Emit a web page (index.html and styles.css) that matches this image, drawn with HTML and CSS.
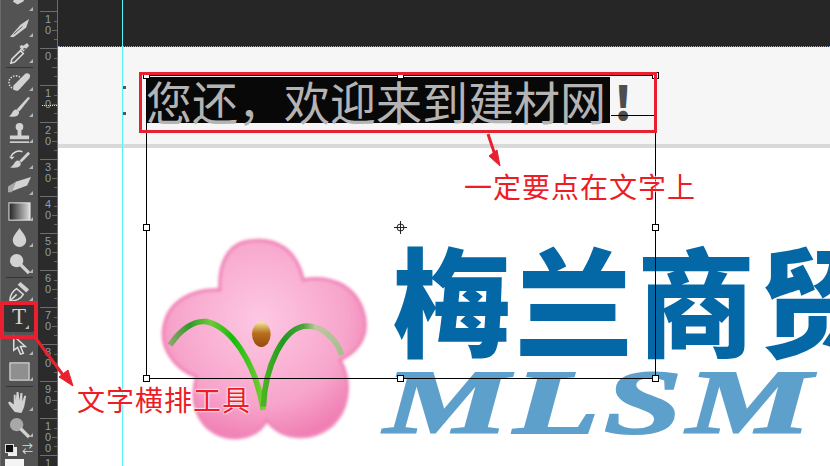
FILE: index.html
```html
<!DOCTYPE html>
<html lang="zh-CN">

<head>
  <meta charset="UTF-8"/>
  <title>文字横排工具</title>
  <link rel="stylesheet" href="styles.css">
</head>

<body>
<div class="window">
  <div class="toolbar">
    <div class="tools">
      <div class="tool"><svg viewBox="0 0 24 24"><path class="fill" d="M5 12l6-7 8 1-3 6-6 3z"/></svg></div>
      <div class="tool"><svg viewBox="0 0 24 24"><path class="fill" d="M2 22L13 9l9-6-3 9L6 22z"/><path class="dark" d="M6 19l9-8"/></svg></div>
      <div class="tool"><svg viewBox="0 0 24 24"><path class="line" d="M3 22l1-4 9-9 3 3-9 9z"/><path class="fill" d="M12 7l2 2 3-3 2 1 3-3-2-3-3 2-1 1-2-1-2 2 4 5 2-2z"/></svg></div>
      <div class="sep"></div>
      <div class="tool"><svg viewBox="0 0 24 24"><circle class="dots" cx="8" cy="13" r="7"/><path class="fill" d="M6 16L18 4c3-2 7 1 4 5L11 21c-3 2-7-1-5-5z"/></svg></div>
      <div class="tool"><svg viewBox="0 0 24 24"><path class="fill" d="M21 1l2 1-11 14-3-2z"/><path class="fill" d="M8 14c4 0 4 4 3 5-2 3-6 3-10 2 3-1 4-7 7-7z"/></svg></div>
      <div class="tool"><svg viewBox="0 0 24 24"><circle class="fill" cx="12" cy="5" r="4"/><path class="fill" d="M10 8h4v6h8v4H2v-4h8z"/><path class="line" d="M2 21h20"/></svg></div>
      <div class="tool"><svg viewBox="0 0 24 24"><path class="line" d="M3 9c2-5 8-7 12-5"/><path class="fill" d="M21 4l2 2-9 9-2-2z"/><path class="fill" d="M10 13c3 0 4 3 3 5-2 3-7 3-11 2 4-1 5-7 8-7z"/><path class="fill" d="M1 9h6l-3 3z"/></svg></div>
      <div class="tool"><svg viewBox="0 0 24 24"><path class="fill" d="M8 8l16-5-4 9-16 6z"/><path class="grey" d="M0 13l8-5-4 11H0z"/></svg></div>
      <div class="tool"><svg viewBox="0 0 24 24"><defs><linearGradient id="ramp"><stop offset="0" stop-color="#222"/><stop offset="1" stop-color="#ddd"/></linearGradient></defs><rect x="1" y="3" width="22" height="18" fill="url(#ramp)" stroke="#eee"/></svg></div>
      <div class="tool"><svg viewBox="0 0 24 24"><path class="fill" d="M12 2c3 5 7 8 7 13a7 7 0 0 1-14 0c0-5 4-8 7-13z"/></svg></div>
      <div class="tool"><svg viewBox="0 0 24 24"><circle class="fill" cx="9" cy="9" r="7"/><path class="thick" d="M13 13l9 9"/></svg></div>
      <div class="sep"></div>
      <div class="tool"><svg viewBox="0 0 24 24"><path class="line" d="M2 22c0-6 2-10 7-13l7 6c-3 5-8 7-14 7z"/><path class="fill" d="M13 2l9 8-3 3-9-8z"/><path class="line" d="M2 22l7-7"/></svg></div>
      <div class="tool tool-active">T</div>
      <div class="tool tool-low"><svg viewBox="0 0 24 24"><path class="line" d="M6 2v15l4-3 3 7 3-1-3-7h5z"/></svg></div>
      <div class="tool"><svg viewBox="0 0 24 24"><rect x="2" y="3" width="20" height="18" fill="#8f8f8f" stroke="#eee"/></svg></div>
      <div class="sep sep-wide"></div>
      <div class="tool"><svg viewBox="0 0 24 24"><path class="fill" d="M7 23c-2-3-6-7-7-10l2-1 4 3V5h2v6l1-9h2l1 9 1-8h2l0 9 2-6h2l-2 11c-1 3-2 5-3 7z"/></svg></div>
      <div class="tool"><svg viewBox="0 0 24 24"><circle class="grey" cx="9" cy="9" r="7"/><path class="thick" d="M13 13l9 9"/></svg></div>
    </div>
    <div class="swatches">
      <div class="mini-swatch"></div>
      <span class="swap">⇄</span>
    </div>
    <div class="swatch"></div>
  </div>

  <div class="ruler">
    <div class="ruler-cell"><span>1</span><span>0</span></div>
    <div class="ruler-cell"><span>0</span></div>
    <div class="ruler-cell"><span>1</span><span>0</span></div>
    <div class="ruler-cell"><span>2</span><span>0</span></div>
    <div class="ruler-cell"><span>3</span><span>0</span></div>
    <div class="ruler-cell"><span>4</span><span>0</span></div>
    <div class="ruler-cell"><span>5</span><span>0</span></div>
    <div class="ruler-cell"><span>6</span><span>0</span></div>
    <div class="ruler-cell"><span>7</span><span>0</span></div>
    <div class="ruler-cell"><span>8</span><span>0</span></div>
    <div class="ruler-cell"><span>9</span><span>0</span></div>
    <div class="ruler-cell"><span>1</span><span>0</span><span>0</span></div>
    <div class="ruler-cell ruler-last"><span>1</span></div>
  </div>

  <div class="canvas">
    <div class="pasteboard"></div>
    <div class="band">
      <span class="selected">您还，欢迎来到建材网</span><span class="bang">!</span>
    </div>
    <div class="band-edge"></div>
    <div class="page">
      <svg class="flower" viewBox="0 0 750 738">
        <defs>
          <radialGradient id="petal" cx="0.48" cy="0.4" r="0.62">
            <stop offset="0" stop-color="#fdc8e4"/>
            <stop offset="0.7" stop-color="#f7a4cb"/>
            <stop offset="1" stop-color="#f07fb3"/>
          </radialGradient>
          <linearGradient id="seed" x1="0" y1="0" x2="0" y2="1">
            <stop offset="0" stop-color="#f6e9a0"/>
            <stop offset="0.45" stop-color="#b8701c"/>
            <stop offset="1" stop-color="#97480e"/>
          </linearGradient>
          <linearGradient id="stem-left" gradientUnits="userSpaceOnUse" x1="90" y1="0" x2="380" y2="0">
            <stop offset="0" stop-color="#8ea66a"/>
            <stop offset="0.2" stop-color="#2f9a2a"/>
            <stop offset="0.42" stop-color="#6fc93a"/>
            <stop offset="0.65" stop-color="#12bd08"/>
            <stop offset="1" stop-color="#86cf3a"/>
          </linearGradient>
          <linearGradient id="stem-right" gradientUnits="userSpaceOnUse" x1="370" y1="0" x2="610" y2="0">
            <stop offset="0" stop-color="#4cb424"/>
            <stop offset="0.25" stop-color="#1e9a1e"/>
            <stop offset="0.5" stop-color="#4da33c"/>
            <stop offset="0.65" stop-color="#bcc8a0"/>
            <stop offset="1" stop-color="#a9bd90"/>
          </linearGradient>
          <filter id="soft"><feGaussianBlur stdDeviation="5"/></filter>
        </defs>
        <path class="petals" d="M240 210C235 130 265 65 340 62C410 55 470 90 490 180C560 165 640 190 668 270C690 335 665 390 600 420C635 480 630 570 570 620C510 665 425 660 380 600C350 660 260 670 205 625C160 585 155 520 170 470C100 445 60 380 72 320C85 240 165 205 240 210Z"/>
        <path class="stem stem-l" d="M90 375C120 330 160 300 200 305C270 320 345 420 370 570"/>
        <path class="stem stem-r" d="M370 560C375 440 430 320 500 318C550 318 590 360 605 405"/>
        <ellipse cx="364" cy="343" rx="28" ry="38" fill="url(#seed)"/>
      </svg>
      <div class="brand">
        <div class="brand-cn">梅兰商贸</div>
        <div class="brand-en">MLSM</div>
      </div>
    </div>
  </div>

  <div class="guide"></div>
  <i class="guide-dot guide-dot-a"></i>
  <i class="guide-dot guide-dot-b"></i>
  <div class="ruler-cursor"></div>

  <div class="transform">
    <i class="handle h-tl"></i><i class="handle h-tc"></i><i class="handle h-tr"></i>
    <i class="handle h-ml"></i><i class="handle h-mr"></i>
    <i class="handle h-bl"></i><i class="handle h-bc"></i><i class="handle h-br"></i>
    <div class="baseline"></div>
  </div>
  <svg class="pivot" viewBox="0 0 13 13"><circle cx="6.5" cy="6.5" r="3.5"/><path d="M6.5 0v13M0 6.5h13"/></svg>

  <div class="mark mark-text"></div>
  <div class="mark mark-tool"></div>
  <svg class="arrows" viewBox="0 0 830 466">
    <path class="arrow-line" d="M34 336L63 375"/>
    <path class="arrow-head" d="M73 386L59 377L68 370Z"/>
    <path class="arrow-line" d="M488 134L495 155"/>
    <path class="arrow-head" d="M500 166L489 156L497 150Z"/>
  </svg>
  <div class="note note-text">一定要点在文字上</div>
  <div class="note note-tool">文字横排工具</div>
</div>
</body>

</html>
```

FILE: styles.css
```css
html, body {
  margin: 0;
  padding: 0;
}

.window {
  position: relative;
  display: flex;
  width: 830px;
  height: 466px;
  overflow: hidden;
  background: #fff;
  font-family: "Liberation Sans", "Noto Sans CJK SC", sans-serif;
}

/* tools panel */
.toolbar {
  width: 37px;
  height: 466px;
  overflow: hidden;
  flex: none;
  background: #535353;
  border-left: 1px solid #6a6a6a;
  border-right: 2px solid #2a2a2a;
}

.tools {
  display: flex;
  flex-direction: column;
  margin-top: -12px;
}

.tool {
  position: relative;
  display: flex;
  justify-content: center;
  align-items: center;
  height: 26px;
  flex: none;
}

.tool::after {
  content: "";
  position: absolute;
  right: 5px;
  bottom: 3px;
  border-left: 4px solid transparent;
  border-bottom: 4px solid #b5b5b5;
}

.tool svg {
  width: 23px;
  height: 23px;
}

.tool-low {
  margin-top: 2px;
}

.tool-active {
  width: 30px;
  height: 30px;
  margin: -2px 0 -2px 3px;
  box-sizing: border-box;
  background: #333;
  border-radius: 2px;
  color: #d4d4d4;
  font-family: "Liberation Serif", serif;
  font-size: 23px;
}

.sep {
  height: 1px;
  margin: 1px 5px 0;
  background: #333;
  flex: none;
}

.sep-wide {
  margin: 2px 5px 1px;
}

.fill { fill: #d2d2d2; }
.grey { fill: #a8a8a8; }
.line { fill: none; stroke: #dcdcdc; stroke-width: 1.6; }
.dark { fill: none; stroke: #555; stroke-width: 1; }
.thick { fill: none; stroke: #d2d2d2; stroke-width: 3.5; }
.dots { fill: none; stroke: #e5e5e5; stroke-width: 1.5; stroke-dasharray: 1.5 1.5; }

.swatches {
  display: flex;
  gap: 8px;
  padding: 3px 0 0 4px;
  color: #ddd;
  font-size: 11px;
  line-height: 13px;
}

.mini-swatch {
  width: 7px;
  height: 7px;
  margin-top: 1px;
  background: #111;
  border: 1px solid #ddd;
  box-shadow: 3px 3px 0 #eee;
}

.swatch {
  width: 19px;
  height: 12px;
  margin: 3px 0 0 4px;
  background: #f4f4f4;
}

/* vertical ruler */
.ruler {
  width: 18px;
  height: 466px;
  flex: none;
  box-sizing: border-box;
  padding-top: 11px;
  overflow: hidden;
  background: #2b2b2b;
  border-right: 1px solid #6e6e6e;
}

.ruler-cell {
  display: flex;
  flex-direction: column;
  height: 37px;
  box-sizing: border-box;
  padding: 2px 0 0 5px;
  border-top: 1px solid #6e6e6e;
  background: linear-gradient(#666, #666) right 9px / 3px 1px no-repeat,
    linear-gradient(#666, #666) right 18px / 5px 1px no-repeat,
    linear-gradient(#666, #666) right 27px / 3px 1px no-repeat;
  color: #8c9eaf;
  font-size: 11px;
  line-height: 11px;
}

.ruler-last {
  height: 10px;
}

.ruler-cursor {
  position: absolute;
  left: 42px;
  top: 105px;
  width: 15px;
  border-top: 1px dotted #e6e6e6;
}

/* document */
.canvas {
  display: flex;
  flex-direction: column;
  flex: 1;
  min-width: 0;
  height: 466px;
  overflow: hidden;
}

.pasteboard {
  height: 47px;
  flex: none;
  box-sizing: border-box;
  background: #262626;
  border-bottom: 1px dotted #7da6e8;
}

.band {
  display: flex;
  height: 97px;
  flex: none;
  box-sizing: border-box;
  padding: 30px 0 0 88px;
  background: #f6f6f6;
}

.selected {
  width: 464px;
  height: 46px;
  background: #080808;
  color: #b4b4b4;
  font-family: "Noto Sans CJK SC", sans-serif;
  font-weight: 400;
  font-size: 46px;
  line-height: 46px;
  white-space: nowrap;
}

.bang {
  margin-left: 4px;
  color: #4e4e4e;
  font-family: "Noto Sans CJK SC", sans-serif;
  font-weight: 900;
  font-size: 46px;
  line-height: 46px;
}

.band-edge {
  height: 4px;
  flex: none;
  background: #d9d9d9;
}

.page {
  display: flex;
  align-items: flex-start;
  flex: 1;
  padding-left: 82px;
  overflow: hidden;
}

.flower {
  width: 250px;
  height: 246px;
  flex: none;
  margin-top: 72px;
}

.petals {
  fill: url(#petal);
  stroke: #f186b8;
  stroke-width: 10;
  stroke-linejoin: round;
  filter: url(#soft);
}

.stem {
  fill: none;
  stroke-width: 17;
  stroke-linecap: butt;
}

.stem-l { stroke: url(#stem-left); }
.stem-r { stroke: url(#stem-right); }

.brand {
  flex: none;
  margin: 86px 0 0 3px;
  white-space: nowrap;
}

.brand-cn {
  color: #0568a6;
  font-family: "Noto Sans CJK SC", sans-serif;
  font-weight: 900;
  font-size: 118px;
  line-height: 126px;
  letter-spacing: 4px;
}

.brand-en {
  margin: 3px 0 0 -9px;
  color: #5ea0cc;
  font-family: "Liberation Serif", serif;
  font-style: italic;
  font-weight: 700;
  font-size: 90px;
  line-height: 80px;
  letter-spacing: 3px;
  -webkit-text-stroke: 2px #5ea0cc;
  transform: scaleX(1.56);
  transform-origin: left top;
}

/* overlays */
.guide {
  position: absolute;
  left: 122px;
  top: 0;
  width: 1px;
  height: 466px;
  background: #55f5f5;
}

.guide-dot {
  position: absolute;
  left: 123px;
  width: 3px;
  height: 3px;
  background: #555;
}

.guide-dot-a { top: 86px; }
.guide-dot-b { top: 112px; }

.transform {
  position: absolute;
  left: 146px;
  top: 75px;
  width: 510px;
  height: 304px;
  box-sizing: border-box;
  border: 1px solid #000;
}

.handle {
  position: absolute;
  width: 5px;
  height: 5px;
  background: #fff;
  border: 1px solid #000;
}

.h-tl, .h-ml, .h-bl { left: -4px; }
.h-tc, .h-bc { left: 250px; }
.h-tr, .h-mr, .h-br { right: -4px; }
.h-tl, .h-tc, .h-tr { top: -4px; }
.h-ml, .h-mr { top: 148px; }
.h-bl, .h-bc, .h-br { bottom: -4px; }

.baseline {
  position: absolute;
  left: 464px;
  right: 0;
  top: 39px;
  border-top: 1px solid #000;
}

.pivot {
  position: absolute;
  left: 394px;
  top: 221px;
  width: 13px;
  height: 13px;
  fill: none;
  stroke: #222;
  stroke-width: 1;
}

.mark {
  position: absolute;
  box-sizing: border-box;
  border-style: solid;
  border-color: #e8202f;
}

.mark-text {
  left: 139px;
  top: 72px;
  width: 518px;
  height: 61px;
  border-width: 3px;
}

.mark-tool {
  left: 0;
  top: 301px;
  width: 38px;
  height: 38px;
  border-width: 4px;
}

.arrows {
  position: absolute;
  left: 0;
  top: 0;
  width: 830px;
  height: 466px;
}

.arrow-line {
  fill: none;
  stroke: #e8202f;
  stroke-width: 3;
}

.arrow-head {
  fill: #e8202f;
  stroke: #e8202f;
}

.note {
  position: absolute;
  color: #ee1c25;
  font-family: "Noto Sans CJK SC", sans-serif;
  font-weight: 400;
  font-size: 28px;
  line-height: 34px;
  letter-spacing: 1px;
  white-space: nowrap;
  text-shadow: 0 0 2px #fff, 0 0 2px #fff, 0 0 2px #fff;
}

.note-text {
  left: 464px;
  top: 169px;
}

.note-tool {
  left: 77px;
  top: 382px;
}
```
